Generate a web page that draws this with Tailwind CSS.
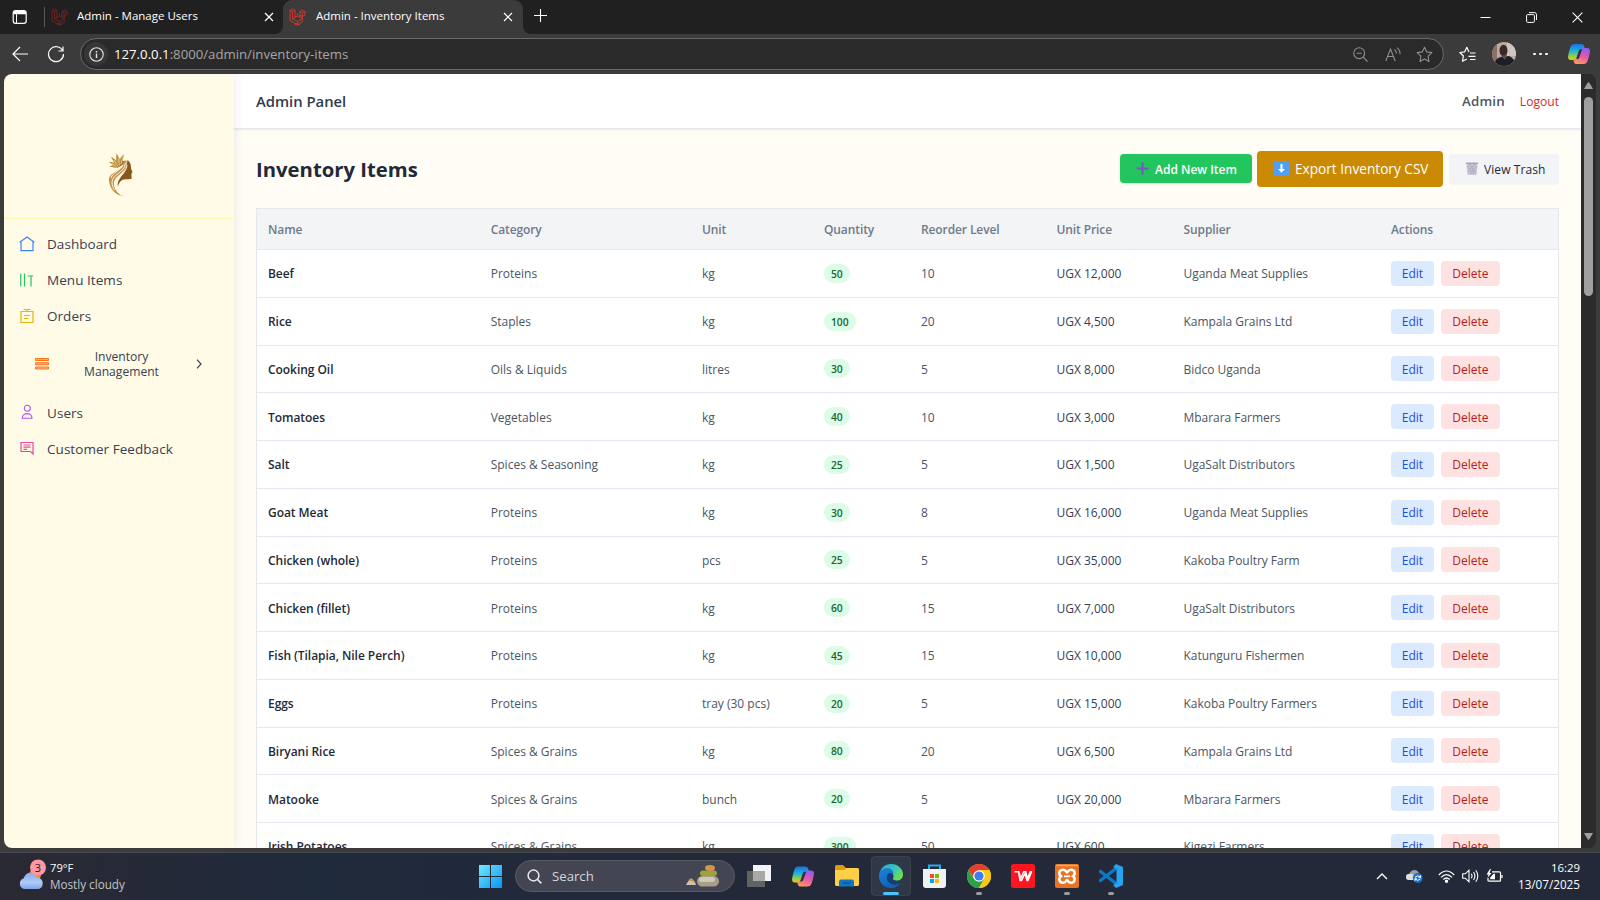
<!DOCTYPE html>
<html lang="en">
<head>
<meta charset="utf-8">
<title>Admin - Inventory Items</title>
<script src="https://cdn.jsdelivr.net/npm/@tailwindcss/browser@4"></script>
</head>
<body class="w-[1600px] h-[900px] overflow-hidden flex flex-col bg-[#3b3b3b] font-['Open_Sans','Noto_Sans',sans-serif] text-[12px] leading-4">
<svg class="absolute w-0 h-0">
  <defs>
    <linearGradient id="cpA" x1="0.3" y1="0" x2="0.3" y2="1"><stop offset="0" stop-color="#1a6fe0"/><stop offset=".45" stop-color="#22b5d8"/><stop offset=".75" stop-color="#8ccf4a"/><stop offset="1" stop-color="#f5c518"/></linearGradient>
    <linearGradient id="cpB" x1="0.6" y1="0" x2="0.3" y2="1"><stop offset="0" stop-color="#8d5cf0"/><stop offset=".5" stop-color="#e858a8"/><stop offset="1" stop-color="#ff9a5a"/></linearGradient>
    <linearGradient id="win" x1="0" y1="0" x2="1" y2="1"><stop offset="0" stop-color="#6fe9ff"/><stop offset="1" stop-color="#0a93f5"/></linearGradient>
    <linearGradient id="edgeA" x1="0" y1="0" x2="1" y2=".6"><stop offset="0" stop-color="#2aa8e0"/><stop offset=".6" stop-color="#35c6c0"/><stop offset="1" stop-color="#6fe04a"/></linearGradient>
    <linearGradient id="edgeB" x1="0" y1="0" x2="0.6" y2="1"><stop offset="0" stop-color="#1c84d8"/><stop offset="1" stop-color="#0f5fb5"/></linearGradient>
    <linearGradient id="gold" x1="0" y1="0" x2="1" y2="1"><stop offset="0" stop-color="#8a5a1c"/><stop offset=".5" stop-color="#c79a4a"/><stop offset="1" stop-color="#8a5a1c"/></linearGradient>
    <linearGradient id="cloud" x1="0" y1="0" x2="0" y2="1"><stop offset="0" stop-color="#86abf2"/><stop offset=".6" stop-color="#b0cbf8"/><stop offset="1" stop-color="#7fa6ee"/></linearGradient>
    <symbol id="laravel" viewBox="0 0 16 17"><path d="M1 2.200 3.300 1l2.300 1.200v6.600l2.300-1.200V4.800M1 2.200v9.600l4.600 2.700 4.600 1.300M1 2.200l2.300 1.300 2.300-1.300M3.300 3.500v6.600l2.300-1.300M3.300 10.100l4.600 2.700 4.600-2.700M5.600 14.500v1.300l2.300.2 4.600-2.700V9.600M7.900 12.800V15.500M10.200 3.500l2.500-1.400 2.500 1.400v3l-2.700 1.500-2.300-1.300zM10.200 3.500l2.300 1.300 2.700-1.300M12.500 4.800v4.800M7.900 7.600l4.600 2.300M10.200 6.500v2.300" fill="none" stroke="currentColor" stroke-width=".8"/></symbol>
    <symbol id="copilot" viewBox="0 0 22 20"><path d="M6.500 0h7c1.700 0 2.400 1.200 2.800 2.600L17 5h-3.500c-1.600 0-2.300 1-2.800 2.600L8.700 14c-.4 1.200-1.200 2-2.700 2H3c-2.600 0-3.300-2-2.800-4.500C.9 8 1.800 4.500 2.900 2 3.500.7 4.800 0 6.500 0z" fill="url(#cpA)"/><path d="M15.500 20h-7c-1.700 0-2.400-1.200-2.800-2.600L5 15h3.500c1.600 0 2.300-1 2.800-2.600L13.300 6c.4-1.200 1.200-2 2.700-2h3c2.600 0 3.300 2 2.800 4.500-.7 3.500-1.600 7-2.700 9.500-.6 1.300-1.900 2-3.600 2z" fill="url(#cpB)"/><path d="M11.500 5.500h2.600L10.800 14.500H8.300z" fill="#343044"/></symbol>
  </defs>
</svg>

<!-- Tab strip -->
<header class="h-[34px] shrink-0 flex items-end text-white">
  <div class="w-[43px] h-[34px] flex items-center pl-[12px] bg-[#202020]">
    <svg class="size-[16px]" viewBox="0 0 16 16"><rect x="1.200" y="1.700" width="13" height="12.600" rx="2.400" fill="none" stroke="#fff" stroke-width="1.200"/><path d="M1.500 4q0-2 2-2h8.500q2 0 2 2v1.300H1.500z" fill="#fff"/><path d="M4.500 5v9" stroke="#fff"/></svg>
  </div>
  <div class="w-[240px] h-[34px] flex items-center bg-[#202020] rounded-br-[8px]">
    <div class="w-px h-[20px] bg-[#5c5c5c] ml-[1px] mr-[6px]"></div>
    <svg class="w-[17px] h-[18px] text-[#7a2521] mr-[9px]"><use href="#laravel"/></svg>
    <span class="text-[11.500px] w-[187px] pb-[2px]">Admin - Manage Users</span>
    <svg class="size-[10px] mb-px" viewBox="0 0 10 10"><path d="M1 1l8 8M9 1l-8 8" stroke="#fff" stroke-width="1.200"/></svg>
  </div>
  <div class="w-[240px] h-[34px] bg-[#202020]"><div class="h-full bg-[#3b3b3b] rounded-t-[9px] flex items-center pl-[6px]">
    <svg class="w-[17px] h-[18px] text-[#e8362b] mr-[10px]"><use href="#laravel"/></svg>
    <span class="text-[11.500px] w-[187px] pb-[2px]">Admin - Inventory Items</span>
    <svg class="size-[10px] mb-px" viewBox="0 0 10 10"><path d="M1 1l8 8M9 1l-8 8" stroke="#fff" stroke-width="1.200"/></svg>
  </div></div>
  <div class="h-[34px] flex-1 flex items-center pl-[11px] bg-[#202020] rounded-bl-[8px]">
    <svg class="size-[13px] mb-[3px]" viewBox="0 0 13 13"><path d="M6.500 0v13M0 6.500h13" stroke="#fff" stroke-width="1.100"/></svg>
  </div>
  <div class="h-[34px] flex items-center gap-[35px] pr-[17px] bg-[#202020]">
    <svg class="size-[11px]" viewBox="0 0 11 11"><path d="M.5 5.500h10" stroke="#fff"/></svg>
    <svg class="size-[11px]" viewBox="0 0 11 11"><rect x=".6" y="2.600" width="7.800" height="7.800" rx="1" fill="none" stroke="#fff"/><path d="M3 .6h5.500q2 0 2 2V8" fill="none" stroke="#fff"/></svg>
    <svg class="size-[11px]" viewBox="0 0 11 11"><path d="M.6.6l9.800 9.800M10.400.6L.6 10.400" stroke="#fff" stroke-width="1.100"/></svg>
  </div>
</header>

<!-- Address bar -->
<div class="h-[40px] shrink-0 flex items-center text-white">
  <svg class="size-[16px] ml-[12px]" viewBox="0 0 16 16"><path d="M8 1L1 8l7 7M1 8h15" fill="none" stroke="#fff" stroke-width="1.200"/></svg>
  <svg class="size-[18px] ml-[19px]" viewBox="0 0 18 18"><path d="M15.800 6A7.500 7.500 0 1 0 16.500 9M16 1.500V6h-4.500" fill="none" stroke="#fff" stroke-width="1.200"/></svg>
  <div class="ml-[15px] w-[1364px] h-[32px] rounded-full border border-[#6a6a6a] bg-[#2a2a2a] flex items-center pl-[4px] pr-[10px]">
    <div class="size-[24px] rounded-full bg-[#373737] grid place-items-center mr-[6px] -ml-[1px]">
      <svg class="size-[15px]" viewBox="0 0 15 15"><circle cx="7.500" cy="7.500" r="6.700" fill="none" stroke="#e4e4e4" stroke-width="1.100"/><path d="M7.500 6.600V11M7.500 4v1.400" stroke="#e4e4e4" stroke-width="1.400"/></svg>
    </div>
    <span class="flex-1 text-[13.200px] text-[#a6a6a6]"><span class="text-white">127.0.0.1</span>:8000/admin/inventory-items</span>
    <svg class="size-[15px]" viewBox="0 0 15 15" fill="none" stroke="#8f8f8f" stroke-width="1.100"><circle cx="6.200" cy="6.200" r="5.400"/><path d="M10.200 10.200l4.300 4.300M3.700 6.200h5"/></svg>
    <svg class="w-[16px] h-[15px] ml-[17px]" viewBox="0 0 16 15" fill="none" stroke="#8f8f8f" stroke-width="1.100"><path d="M.8 14L5.500 2 10.200 14M2.500 9.500h6M9.500 2.500q2 1.500 1.800 4M12 .6q3.300 2.700 3 6.700"/></svg>
    <svg class="size-[17px] ml-[15px]" viewBox="0 0 17 17" fill="none" stroke="#8f8f8f" stroke-width="1.100" stroke-linejoin="round"><path d="M8.500 1.200l2.200 4.700 5.200.7-3.800 3.600.9 5.200-4.500-2.500L4 15.400l.9-5.200L1.100 6.600l5.200-.7z"/></svg>
  </div>
  <svg class="w-[17px] h-[17px] ml-[15px]" viewBox="0 0 17 17" fill="none" stroke="#fff" stroke-width="1.200" stroke-linejoin="round"><path d="M10 5.900L7.800 1.300 5.700 5.800.8 6.500l3.600 3.500-.9 5.200L7.800 13M11 7h5.500M9.500 10.300h7M11 13.500h5.500"/></svg>
  <svg class="size-[24px] ml-[16px]" viewBox="0 0 24 24"><clipPath id="av"><circle cx="12" cy="12" r="12"/></clipPath><g clip-path="url(#av)"><path fill="#b8aaa4" d="M0 0h24v24H0z"/><path fill="#8d6e62" d="M0 0h5v24H0z"/><path fill="#cfc6c4" d="M15 0h9v14h-9z"/><path fill="#1c1f2a" d="M2 24q1-9 8-9l7-1q6 2 6 10z"/><ellipse cx="11.500" cy="8.500" rx="4" ry="5.800" fill="#3b2925"/><path d="M9 14l4 4 2-5z" fill="#5d4a45"/></g></svg>
  <div class="flex gap-[3.500px] ml-[17px]"><i class="size-[2.600px] rounded-full bg-white"></i><i class="size-[2.600px] rounded-full bg-white"></i><i class="size-[2.600px] rounded-full bg-white"></i></div>
  <svg class="w-[22px] h-[20px] ml-[20px]"><use href="#copilot"/></svg>
</div>

<!-- Page -->
<div class="h-[774px] shrink-0 mx-[4px] rounded-[8px] overflow-hidden flex bg-[#2b2b2b]">
  <aside class="w-[230px] shrink-0 bg-[#fffbe7] shadow-[2px_0_10px_rgba(0,0,0,0.07)] z-10 text-[#374151]">
    <div class="h-[145px] border-b border-[#fef5b0] flex justify-center pt-[79px]">
      <svg class="w-[27px] h-[44px] ml-px" viewBox="0 0 27 44"><path d="M21.500 7c3.500 2.500 3.500 6 3.500 8.500l1.500 3.500-1 1.500V26l-8 .6c-3 1-5 4-5.500 7C10 26 20 22 21.500 7z" fill="#8a571b"/><path d="M11 15L3 13.500 7 12 2.700 8.700 8 9.500 5 3.700l5 3.600L10.700.5l3 5.500L17.700 1l-.8 7L20 7.500q-2 4.500-9 7.500z" fill="url(#gold)"/><path d="M11 14.500L6 10.500M12 13.500L8 7M13.500 12.500l-1-7M15 11l1.500-6" stroke="#f3e3b8" stroke-width=".7"/><path d="M20.500 7C22 22 7 21 8 32c.5 5 4 9 9 10.700C9 43 3 34 3 27c0-8 12-8 14.500-16z" fill="#c0924a"/><path d="M19.500 10c-1 10-13 11-13.500 19 0 3 1 6 2.500 8M17 12c-3 6-10 7-12 13M21 12c-1 9-9 12-11 17-1 4 1 9 5 13" fill="none" stroke="#fff6dd" stroke-width="1"/></svg>
    </div>
    <nav class="pt-[7px] text-[13.500px] tracking-[0.050px] flex flex-col">
      <a class="h-[36px] flex items-center pl-[15px] gap-[12px]"><svg class="size-[16px]" viewBox="0 0 16 16" fill="none" stroke="#3b82f6" stroke-width="1.200"><path d="M.7 6.300L8 1l7.300 5.300M2 5.500v9.200h12V5.500"/></svg>Dashboard</a>
      <a class="h-[36px] flex items-center pl-[15px] gap-[12px]"><svg class="size-[16px]" viewBox="0 0 16 16" fill="none" stroke="#22c55e" stroke-width="1.200"><path d="M1.800 1.500v13M5.500 1.500v13M8.700 4h5.500M12 4v10.500"/></svg>Menu Items</a>
      <a class="h-[36px] flex items-center pl-[15px] gap-[12px]"><svg class="size-[16px]" viewBox="0 0 16 16" fill="none" stroke="#eab308" stroke-width="1.200"><path d="M2 3.500h12v11H2zM4.500 1.500h7M8 1.500v2M5 7.500h6M5 10.500h4.500"/></svg>Orders</a>
      <div class="h-[61px] flex items-center pl-[31px] pb-[2px] text-[12.100px] tracking-normal leading-[15px]">
        <svg class="w-[14px] h-[12px]" viewBox="0 0 14 12"><path d="M.5.5h13v2H.5zM.5 4.700h13v2H.5zM.5 9h13v2H.5z" fill="#fdba8c" stroke="#f97316"/></svg>
        <span class="w-[145px] text-center -mr-[1px]">Inventory<br>Management</span>
        <svg class="w-[6px] h-[10px] ml-[3px]" viewBox="0 0 6 10"><path d="M1 .7L5 5 1 9.300" fill="none" stroke="#374151" stroke-width="1.200"/></svg>
      </div>
      <a class="h-[36px] flex items-center pl-[15px] gap-[12px]"><svg class="size-[16px] mb-[2px]" viewBox="0 0 16 16" fill="none" stroke="#a855f7" stroke-width="1.100"><circle cx="8.300" cy="4.300" r="3"/><path d="M3.300 14.300c0-6.300 9.700-6.300 9.700 0z"/></svg>Users</a>
      <a class="h-[36px] flex items-center pl-[15px] gap-[12px]"><svg class="size-[16px] mb-[2px]" viewBox="0 0 16 16" fill="none" stroke="#ec4899" stroke-width="1.200"><path d="M2 2.500h12v11.500l-2.500-2.500H2zM4.500 5h7M4.500 7.200h7M4.500 9.300h3.500"/></svg>Customer Feedback</a>
    </nav>
  </aside>

  <main class="w-[1347px] shrink-0 bg-[#fffdf5] flex flex-col">
    <div class="h-[55px] shrink-0 bg-white border-b border-[#e5e7eb] shadow-[0_1px_2px_rgba(0,0,0,0.08)] flex items-center pl-[22px] pr-[22px]">
      <span class="flex-1 text-[14.800px] font-semibold text-[#303b4b]">Admin Panel</span>
      <span class="text-[13.300px] font-semibold text-[#4b5563] tracking-[0.200px] mr-[15px]">Admin</span>
      <span class="text-[12.100px] text-[#dc2626] pt-[2px]">Logout</span>
    </div>
    <div class="h-[79px] shrink-0 flex items-center pl-[22px] pr-[22px]">
      <h1 class="flex-1 text-[20.300px] font-bold text-[#1f2937] leading-7">Inventory Items</h1>
      <div class="w-[132px] h-[29px] rounded-[4px] bg-[#22c55e] text-white font-semibold shadow-sm flex items-center pl-[16px] gap-[6px] whitespace-nowrap">
        <svg class="size-[13px]" viewBox="0 0 13 13"><path d="M6.500.5v12M.5 6.500h12" stroke="#7b55c7" stroke-width="2.200"/></svg><span class="pt-[2px]">Add New Item</span>
      </div>
      <div class="w-[186px] h-[36px] ml-[5px] rounded-[4px] bg-[#ca8a04] text-white text-[13.650px] flex items-center pl-[17px] gap-[6px] whitespace-nowrap">
        <svg class="size-[15px]" viewBox="0 0 15 15"><rect width="15" height="15" rx="1" fill="#4da0f5"/><path d="M6.500 3h2v5h2.500L7.500 11.800 4 8h2.500z" fill="#fff"/></svg>Export Inventory CSV
      </div>
      <div class="w-[110px] h-[30px] ml-[6px] rounded-[4px] bg-[#f3f4f6] text-[#1f2937] font-medium shadow-[0_1px_1px_rgba(0,0,0,0.03)] flex items-center pl-[17px] gap-[6px] whitespace-nowrap">
        <svg class="w-[12px] h-[14px]" viewBox="0 0 12 14"><path d="M.5 1.500h11L10.500 13h-9z" fill="#c9c4d2"/><path d="M1 4l7 8M3 2l7 9M11 4L4 12M9 2L2 10" stroke="#a49eb2" stroke-width=".7"/><path d="M0 1.200h12" stroke="#aaa5b6" stroke-width="1.400"/></svg><span class="pt-[2px] tracking-[0.080px]">View Trash</span>
      </div>
    </div>
    <div class="ml-[22px] w-[1303px] shrink-0 border border-[#e5e7eb] bg-white text-[#4b5563]">
      <div class="h-[41px] grid grid-cols-[222.700px_211.300px_122px_97px_135.500px_127px_207.500px_1fr] items-center pl-[11px] pt-[2px] bg-[#f3f4f6] border-b border-[#e2e8f0] font-semibold tracking-[-0.100px] text-[#6f7a8b]">
        <span>Name</span><span>Category</span><span>Unit</span><span>Quantity</span><span>Reorder Level</span><span>Unit Price</span><span>Supplier</span><span>Actions</span>
      </div>
      <div id="rows"></div>
    </div>
  </main>

  <div class="w-[15px] h-full flex flex-col items-center bg-[#2b2b2b]">
    <svg class="w-[9px] h-[7px] mt-[8px] shrink-0" viewBox="0 0 9 7"><path d="M4.500 0Q5.200 0 9 7H0Q3.800 0 4.500 0z" fill="#9f9f9f"/></svg>
    <div class="w-[9px] h-[199px] mt-[8px] rounded-full bg-[#9f9f9f]"></div>
    <div class="flex-1"></div>
    <svg class="w-[9px] h-[7px] mb-[8px] shrink-0" viewBox="0 0 9 7"><path d="M4.500 7Q5.200 7 9 0H0Q3.800 7 4.500 7z" fill="#9f9f9f"/></svg>
  </div>
</div>
<div class="h-[4px] shrink-0"></div>

<!-- Taskbar -->
<footer class="h-[48px] shrink-0 border-t border-[#484a50] bg-linear-to-r from-[#2a2933] via-[#1f2a3c] via-20% to-[#242939] to-50% flex items-center pb-[1px] text-white">
  <svg class="w-[28px] h-[32px] ml-[18px] -mt-[3px]" viewBox="0 0 28 32"><circle cx="17" cy="16" r="6" fill="#f98a1c"/><path d="M6 30a5.500 5.500 0 0 1-.5-10.500Q8 13 13.500 14q4 .5 5.200 4.500 6 .5 6 5.700 0 5.800-5.700 5.800z" fill="url(#cloud)"/><circle cx="20" cy="8.500" r="8" fill="#ff98a2"/><text x="20" y="12.500" text-anchor="middle" font-size="11" fill="#2b1518">3</text></svg>
  <div class="w-[429px] pl-[4px] text-[11.200px] leading-4"><div class="text-[#fff]">79°F</div><div class="text-[#c3c4ca] text-[11.700px]">Mostly cloudy</div></div>
  <svg class="size-[23px] ml-[4px]" viewBox="0 0 23 23"><path d="M0 0h11v11H0zM12 0h11v11H12zM0 12h11v11H0zM12 12h11v11H12z" fill="url(#win)"/></svg>
  <div class="ml-[13px] w-[220px] h-[32px] rounded-full bg-[#434552] border border-[#575966] flex items-center pl-[11px] pr-[14px]">
    <svg class="size-[15px]" viewBox="0 0 15 15" fill="none" stroke="#e8e8ea" stroke-width="1.500"><circle cx="6.500" cy="6.500" r="5.400"/><path d="M10.400 10.400l4 4"/></svg>
    <span class="flex-1 pl-[10px] text-[13.200px] text-[#d6d6da]">Search</span>
    <svg class="w-[34px] h-[22px]" viewBox="0 0 34 22"><path d="M0 20q3-6 5-6.500Q8 14 10 20z" fill="#c9c2b6"/><path d="M3 15.500l2.500-2.500 3 4z" fill="#d98b28"/><rect x="11" y="11" width="22" height="10.500" rx="5.200" fill="#a89d89"/><rect x="13" y="12" width="16" height="5" rx="2.500" fill="#d0c7b5"/><rect x="14" y="5.500" width="17" height="5.500" rx="2.700" fill="#9ea338"/><ellipse cx="24" cy="3" rx="5" ry="2.900" fill="#d29448"/></svg>
  </div>
  <svg class="w-[24px] h-[22px] ml-[12px]" viewBox="0 0 24 22"><path d="M6 0h18v16H6z" fill="#f4f4f4"/><path d="M0 6h18v16H0z" fill="#626262"/><path d="M6 6h12v10H6z" fill="#a9a9a9"/></svg>
  <svg class="w-[22px] h-[21px] ml-[21px]"><use href="#copilot"/></svg>
  <svg class="w-[24px] h-[22px] ml-[21px]" viewBox="0 0 24 22"><path d="M0 1.500Q0 0 1.500 0H8l3 3h11Q24 3 24 5v3H0z" fill="#dd9a0c"/><path d="M0 5h9l2.500-2H22q2 0 2 2v14.500q0 1.500-1.500 1.500h-21Q0 21 0 19.500z" fill="#ffcf48"/><path d="M4 21.500v-5Q4 14.500 6 14.500h11q2 0 2 2v5z" fill="#1377c9"/><path d="M7.500 18h8" stroke="#0a5596" stroke-width="1.500"/></svg>
  <div class="ml-[12px] w-[40px] h-[40px] rounded-[4px] bg-[#303847] border border-[#3a4250] flex flex-col items-center pt-[7px]">
    <svg class="size-[24px] shrink-0" viewBox="0 0 24 24"><path d="M0.500 10C1.500 4 6 0 12 0c7 0 12 5 12 10.500 0 4-3 6-6.500 6-2.500 0-4-1-3.500-2.200.5-1 .8-2 .3-3.300C13 7.500 6 4.500.5 10z" fill="url(#edgeA)"/><path d="M0 12c0-5 4-8 8.500-8 3.500 0 6 3 6 6-4.500-2.500-7 1-6.500 4.500.6 4.500 6 8 13.500 5C18 23.500 14 24 12 24 5 24 0 18.500 0 12z" fill="url(#edgeB)"/><path d="M8 14c-.3-2.500 1.200-5 4-5 1.500 1.500 2 3 1 5.200-.6 1.500 1 3.300 4.500 3.300 2.500 0 4-.5 5-1-.3 1-1 2.300-2 3C14 22 8.500 19 8 14z" fill="#123f80"/></svg>
    <i class="w-[16px] h-[3px] mt-[4px] rounded-full bg-[#4cc2ff] shrink-0"></i>
  </div>
  <svg class="w-[23px] h-[24px] ml-[12px]" viewBox="0 0 23 24"><path d="M6 6V1.500h11V6" fill="none" stroke="#29a9ea" stroke-width="2"/><path d="M0 5h23v16q0 3-3 3H3q-3 0-3-3z" fill="#f1f1f1"/><path d="M7 10h4v4H7z" fill="#f25022"/><path d="M12 10h4v4h-4z" fill="#7fba00"/><path d="M7 15h4v4H7z" fill="#00a4ef"/><path d="M12 15h4v4h-4z" fill="#ffb900"/></svg>
  <div class="w-[24px] h-[40px] ml-[21px] flex flex-col items-center pt-[8px]">
    <svg class="size-[24px] shrink-0" viewBox="0 0 24 24"><circle cx="12" cy="12" r="12" fill="#fbc916"/><path d="M1.600 6A12 12 0 0 1 22.400 6L12 6.500 7 14z" fill="#e0402f"/><path d="M1.600 6A12 12 0 0 0 12 24l5-9-10 0z" fill="#2da04a"/><path d="M22.400 6H12v5l5.200 4L12 24A12 12 0 0 0 22.400 6z" fill="#fbc916"/><circle cx="12" cy="12" r="5.800" fill="#fff"/><circle cx="12" cy="12" r="4.600" fill="#3c7df0"/></svg>
    <i class="w-[6px] h-[3px] mt-[4px] rounded-full bg-[#9a9da4] shrink-0"></i>
  </div>
  <svg class="size-[24px] ml-[20px]" viewBox="0 0 24 24"><rect width="24" height="24" rx="2.500" fill="#ff1420"/><path d="M3.500 7.800h4.300l2 6.500 3-6.500h2l1.500 6.500 3-6.500H21M7.500 8l1.500 8.500h1.500L14 9.500l2 7h1L20.500 8" fill="none" stroke="#fff" stroke-width="1.400"/></svg>
  <div class="w-[24px] h-[40px] ml-[20px] flex flex-col items-center pt-[8px]">
    <svg class="size-[24px] shrink-0" viewBox="0 0 24 24"><rect width="24" height="24" rx="2" fill="#e87422"/><path d="M1 1.500h22" stroke="#f3a76c" stroke-width="1.500"/><path d="M8 5.800c3.500 0 3 2.700 4 2.700s.5-2.700 4-2.700c4.500 0 4.500 4.700 2 6.400 2.500 1.700 2.500 6.500-2 6.500-3.500 0-3-2.700-4-2.700s-.5 2.700-4 2.700c-4.500 0-4.500-4.800-2-6.500-2.500-1.700-2.500-6.400 2-6.400z" fill="none" stroke="#fff" stroke-width="2.500"/><path d="M9 12.300h6" stroke="#fff" stroke-width="1.800"/></svg>
    <i class="w-[6px] h-[3px] mt-[4px] rounded-full bg-[#9a9da4] shrink-0"></i>
  </div>
  <div class="w-[24px] h-[40px] ml-[20px] flex flex-col items-center pt-[8px]">
    <svg class="size-[24px] shrink-0" viewBox="0 0 24 24"><path d="M1.500 7.500L17 19.500M1.500 16.500L17 4.500" stroke="#0b79c8" stroke-width="3.400" stroke-linecap="round"/><path d="M17 0l7 3v18l-7 3-3-3 3.500-2V5L14 3z" fill="#29a3ef"/></svg>
    <i class="w-[6px] h-[3px] mt-[4px] rounded-full bg-[#9a9da4] shrink-0"></i>
  </div>
  <div class="flex-1"></div>
  <svg class="w-[12px] h-[7px]" viewBox="0 0 12 7"><path d="M1 6l5-5 5 5" fill="none" stroke="#fff" stroke-width="1.400"/></svg>
  <svg class="w-[17px] h-[14px] ml-[18px]" viewBox="0 0 17 14"><path d="M3 11a3 3 0 0 1 0-6Q5 1 8.500 1q3.500 0 4.500 3.500L14 11z" fill="#9c9c9c"/><path d="M3 11a3 3 0 0 1 0-6q4-1 6 3v3z" fill="#dedede"/><circle cx="11.700" cy="9" r="4.900" fill="#1674d1"/><path d="M9 8.300q2.700-3 5.400 0M14.400 9.900q-2.700 3-5.400 0M14.500 6.300v2h-2M8.900 11.800v-2h2" fill="none" stroke="#fff"/></svg>
  <svg class="w-[17px] h-[13px] ml-[15px]" viewBox="0 0 17 13" fill="none" stroke="#fff" stroke-width="1.200"><path d="M.8 5Q8.500-3 16.200 5M3 7.300q5.500-5.500 11 0M5.300 9.500q3.200-3 6.400 0"/><circle cx="8.500" cy="11.200" r="1.100" fill="#fff"/></svg>
  <svg class="w-[17px] h-[14px] ml-[7px]" viewBox="0 0 17 14" fill="none" stroke="#fff" stroke-width="1.100"><path d="M.7 4.800h2.600L7 1.200v11.600L3.300 9.200H.7zM9.300 4.700q1.500 2.300 0 4.600M11.500 3q2.800 4 0 8M13.800 1.300q4 5.700 0 11.400"/></svg>
  <svg class="w-[17px] h-[14px] ml-[7px]" viewBox="0 0 17 14" fill="none" stroke="#fff" stroke-width="1.200"><path d="M6 2.800h7.500q1 0 1 1v7.400q0 1-1 1H3q-1 0-1-1V9M16 6v3"/><path d="M4.200 10.300V8.500L7.500 4.800H9v5.500z" fill="#fff" stroke="none"/><path d="M4 0L.5 5.500h2L1.500 9 5.500 4h-2L5 0z" fill="#fff" stroke="none"/></svg>
  <div class="w-[78px] pr-[20px] box-content -ml-px text-right text-[11.400px] leading-4"><div>16:29</div><div class="text-[11.700px]">13/07/2025</div></div>
</footer>

<script>
const items = [
  ["Beef","Proteins","kg",50,10,"12,000","Uganda Meat Supplies"],
  ["Rice","Staples","kg",100,20,"4,500","Kampala Grains Ltd"],
  ["Cooking Oil","Oils & Liquids","litres",30,5,"8,000","Bidco Uganda"],
  ["Tomatoes","Vegetables","kg",40,10,"3,000","Mbarara Farmers"],
  ["Salt","Spices & Seasoning","kg",25,5,"1,500","UgaSalt Distributors"],
  ["Goat Meat","Proteins","kg",30,8,"16,000","Uganda Meat Supplies"],
  ["Chicken (whole)","Proteins","pcs",25,5,"35,000","Kakoba Poultry Farm"],
  ["Chicken (fillet)","Proteins","kg",60,15,"7,000","UgaSalt Distributors"],
  ["Fish (Tilapia, Nile Perch)","Proteins","kg",45,15,"10,000","Katunguru Fishermen"],
  ["Eggs","Proteins","tray (30 pcs)",20,5,"15,000","Kakoba Poultry Farmers"],
  ["Biryani Rice","Spices & Grains","kg",80,20,"6,500","Kampala Grains Ltd"],
  ["Matooke","Spices & Grains","bunch",20,5,"20,000","Mbarara Farmers"],
  ["Irish Potatoes","Spices & Grains","kg",300,50,"600","Kigezi Farmers"]
];
const esc = s => String(s).replace(/&/g, "&amp;");
document.getElementById("rows").innerHTML = items.map(([n, c, u, q, r, p, s]) => `
  <div class="h-[47.75px] grid grid-cols-[222.700px_211.300px_122px_97px_135.500px_127px_207.500px_1fr] items-center pl-[11px] border-b border-[#e2e8f0]">
    <span class="pt-[2px] font-semibold tracking-[-0.050px] text-[#1f2937]">${n}</span><span class="pt-[2px]">${esc(c)}</span><span class="pt-[2px]">${u}</span>
    <span class="flex"><b class="h-[19px] px-[7px] rounded-full bg-[#dcfce7] text-[#166534] text-[10.300px] font-semibold leading-[20px]">${q}</b></span>
    <span class="pt-[2px]">${r}</span><span class="pt-[2px] text-[#374151]">UGX ${p}</span><span class="pt-[2px] tracking-[-0.030px]">${s}</span>
    <span class="flex gap-[7px] font-medium"><button class="w-[43px] h-[25px] pt-[2px] rounded-[4px] bg-[#dbeafe] text-[#1d4ed8]">Edit</button><button class="w-[59px] h-[25px] pt-[2px] rounded-[4px] bg-[#fee2e2] text-[#b91c1c]">Delete</button></span>
  </div>`).join("");
</script>
</body>
</html>
